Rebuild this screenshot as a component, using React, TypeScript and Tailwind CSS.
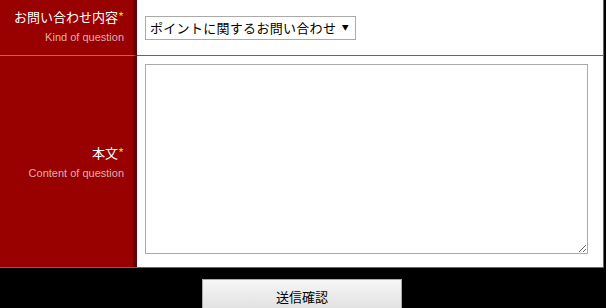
const jp = { fontFamily: '"Noto Sans CJK JP", "Noto Sans", sans-serif' };
const en = { fontFamily: '"Liberation Sans", Arial, sans-serif' };

const Label = ({ title, sub }: { title: string; sub: string }) => (
  <div className="text-right pr-[9px]">
    <div className="text-[13px] leading-[18px] text-white" style={jp}>
      {title}
      <span className="text-[#ffcc00]">*</span>
    </div>
    <div className="mt-[4px] text-[11px] leading-[14px] text-[#dcb0b0]" style={en}>
      {sub}
    </div>
  </div>
);

const App = () => {
  return (
    <div className="w-[606px] h-[308px] bg-black overflow-hidden">
      <div className="w-[604px] bg-white border-r border-b border-[#666]">
        {/* Kind of question */}
        <div className="flex h-[56px]">
          <div className="w-[137px] bg-[#990000] border-r-4 border-r-[#660000] border-b border-b-[#b06a6a] pt-[8px]">
            <Label title="お問い合わせ内容" sub="Kind of question" />
          </div>
          <div className="flex-1 border-b border-[#666] flex items-center pl-[8px]">
            <div
              className="h-[24px] w-[211px] border border-[#aaa] bg-white flex items-center pl-[4px] pr-[6px] text-[13px] tracking-[0.3px] text-black"
              style={jp}
            >
              <span className="flex-1">ポイントに関するお問い合わせ</span>
              <span className="text-[7px]">▼</span>
            </div>
          </div>
        </div>

        {/* Content of question */}
        <div className="flex h-[211px]">
          <div className="w-[137px] bg-[#990000] border-r-4 border-r-[#660000] flex flex-col justify-center">
            <Label title="本文" sub="Content of question" />
          </div>
          <div className="flex-1 pl-[8px] pt-[8px]">
            <textarea className="block w-[443px] h-[190px] border border-[#aaa] bg-white outline-none" />
          </div>
        </div>
      </div>

      <div className="w-[604px] flex justify-center pt-[11px]">
        <button
          className="w-[200px] h-[36px] border border-[#aaa] bg-gradient-to-b from-[#f6f6f6] to-[#dedede] text-[13px] text-black"
          style={jp}
        >
          送信確認
        </button>
      </div>
    </div>
  );
};

export default App;
